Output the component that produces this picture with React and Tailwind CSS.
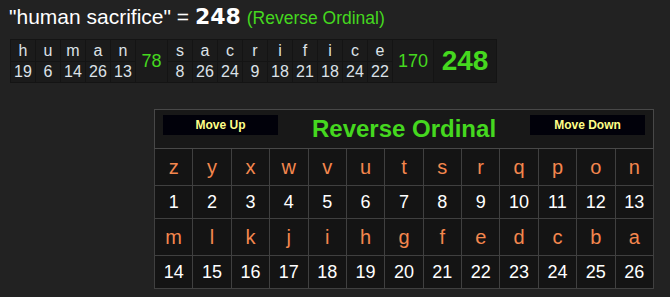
import React from 'react';

const words = [
  { letters: ['h', 'u', 'm', 'a', 'n'], values: [19, 6, 14, 26, 13], total: 78 },
  { letters: ['s', 'a', 'c', 'r', 'i', 'f', 'i', 'c', 'e'], values: [8, 26, 24, 9, 18, 21, 18, 24, 22], total: 170 },
];

const alphabet = 'zyxwvutsrqponmlkjihgfedcba'.split('');

const font = { fontFamily: '"Liberation Sans", Arial, sans-serif' };

const BreakdownTable = () => {
  // one column per letter, then a two-row cell with the word's total
  const cells = [];
  let col = 1;
  words.forEach((word, w) => {
    word.letters.forEach((ch, i) => {
      cells.push(
        <div key={`l${w}-${i}`} className="bg-[#1b1b1b] flex items-center justify-center text-[16px] text-[#dde2e8]" style={{ gridColumn: col, gridRow: 1 }}>
          {ch}
        </div>
      );
      cells.push(
        <div key={`v${w}-${i}`} className="bg-[#1b1b1b] flex items-center justify-center text-[16px] text-[#dde2e8]" style={{ gridColumn: col, gridRow: 2 }}>
          {word.values[i]}
        </div>
      );
      col += 1;
    });
    cells.push(
      <div key={`t${w}`} className="bg-[#1b1b1b] row-span-2 flex items-center justify-center text-[18px] text-[#45d81f]" style={{ gridColumn: col, gridRow: '1 / span 2' }}>
        {word.total}
      </div>
    );
    col += 1;
  });

  return (
    <div
      className="grid w-fit gap-px p-px bg-[#141414] grid-cols-[repeat(5,24px)_31px_repeat(9,24px)_40px_62px] grid-rows-[21px_20px]"
    >
      {cells}
      <div className="bg-[#191919] flex items-center justify-center text-[28px] font-bold text-[#45d81f]" style={{ gridColumn: 17, gridRow: '1 / span 2' }}>
        248
      </div>
    </div>
  );
};

const CipherTable = () => {
  const rows = [alphabet.slice(0, 13), alphabet.slice(13)];
  return (
    <table className="border-collapse border border-[#484848] w-[500px] table-fixed">
      <thead>
        <tr>
          <th colSpan={13} className="bg-[#181818] border border-[#484848] p-0 h-[39px]">
            <div className="flex items-start justify-between px-2 pt-[5px] h-full">
              <button className="w-[115px] h-[20px] bg-[#01010a] text-[#ffff88] text-[12px] font-bold leading-[20px]">
                Move Up
              </button>
              <span className="text-[24px] font-bold leading-[28px] text-[#45d81f]">Reverse Ordinal</span>
              <button className="w-[115px] h-[20px] bg-[#01010a] text-[#ffff88] text-[12px] font-bold leading-[20px]">
                Move Down
              </button>
            </div>
          </th>
        </tr>
      </thead>
      <tbody>
        {rows.map((row, r) => (
          <React.Fragment key={r}>
            <tr className="h-[37px]">
              {row.map((ch) => (
                <td key={ch} className="bg-[#141414] border border-[#404040] text-center text-[20px] text-[#f4874e] p-0">
                  {ch}
                </td>
              ))}
            </tr>
            <tr className="h-[33px]">
              {row.map((ch, i) => (
                <td key={ch} className="bg-[#141414] border border-[#404040] text-center text-[18px] text-white p-0">
                  {r * 13 + i + 1}
                </td>
              ))}
            </tr>
          </React.Fragment>
        ))}
      </tbody>
    </table>
  );
};

const App = () => {
  return (
    <div className="w-[670px] h-[297px] bg-[#222222] overflow-hidden" style={font}>
      <div className="pl-[9px] pt-[4px] h-[30px] leading-[26px] text-[21px] text-white whitespace-nowrap">
        "human sacrifice" ={' '}
        <span className="font-bold text-[22px]" style={{ fontFamily: '"DejaVu Sans", Verdana, sans-serif' }}>248</span>{' '}
        <span className="text-[17.5px] text-[#45d81f]">(Reverse Ordinal)</span>
      </div>
      <div className="mt-[9px] ml-[10px]">
        <BreakdownTable />
      </div>
      <div className="mt-[26px] ml-[154px]">
        <CipherTable />
      </div>
    </div>
  );
};

export default App;
